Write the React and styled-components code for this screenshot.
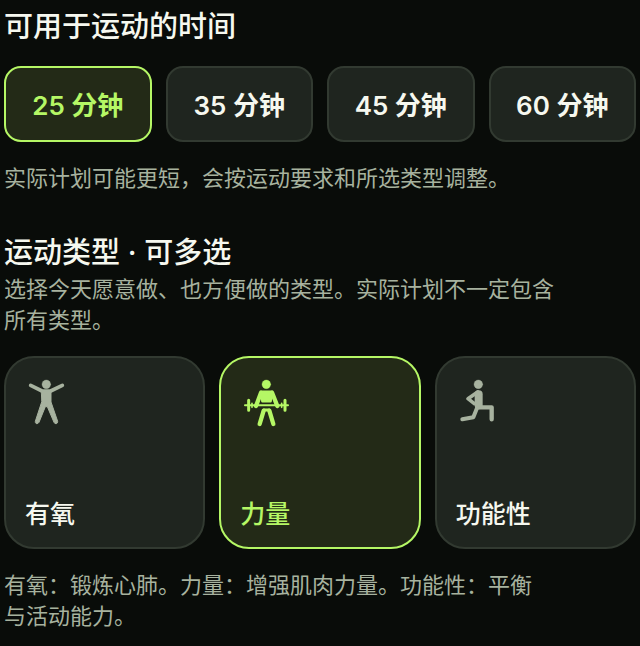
import { useState } from "react";
import styled, { createGlobalStyle } from "styled-components";

const GlobalStyle = createGlobalStyle`
  * {
    box-sizing: border-box;
  }
  body {
    margin: 0;
    background: #090c09;
    color: #f6f8ef;
    font-family: Inter, "Noto Sans CJK SC", sans-serif;
  }
  h2, p {
    margin: 0;
  }
`;

const durations = [25, 35, 45, 60];

const AerobicIcon = () => (
  <Icon viewBox="15 18 144 144">
    <circle cx="79" cy="43" r="13" fill="currentColor" />
    <path d="M32 46L66 63H92L127 46" strokeWidth="11" />
    <path
      d="M65 62H93L93 96L113 154Q114 159 109 161Q104 162 102 157L82 110H76L57 157Q54 162 49 161Q45 158 46 154L65 96Z"
      fill="currentColor"
      strokeWidth="3"
    />
  </Icon>
);

const StrengthIcon = () => (
  <Icon viewBox="13 18 144 144">
    <circle cx="92" cy="43" r="13" fill="currentColor" />
    <path d="M28 106H157" strokeWidth="6" />
    <path d="M39 91V121M148 91V121" strokeWidth="9" />
    <path d="M49 100V112M138 100V112" strokeWidth="5" />
    <path d="M76 68L61 108M109 68L125 108" strokeWidth="13" />
    <path d="M76 65H109L105 94H80Z" fill="currentColor" strokeWidth="7" />
    <path d="M84 122L72 162M101 122L113 162" strokeWidth="13" />
    <path d="M84 120H101" strokeWidth="9" />
  </Icon>
);

const FunctionalIcon = () => (
  <Icon viewBox="17 18 144 144">
    <circle cx="84" cy="43" r="13" fill="currentColor" />
    <path d="M82 66L53 86L72 101" strokeWidth="11" />
    <path d="M85 73V106" strokeWidth="24" />
    <path d="M84 112H124V148" strokeWidth="13" />
    <path d="M81 112L69 142L36 148" strokeWidth="12" />
  </Icon>
);

const types = [
  { id: "aerobic", label: "有氧", Figure: AerobicIcon },
  { id: "strength", label: "力量", Figure: StrengthIcon },
  { id: "functional", label: "功能性", Figure: FunctionalIcon },
];

const App = () => {
  const [duration, setDuration] = useState(25);
  const [selected, setSelected] = useState(["strength"]);

  const toggleType = (id) => {
    setSelected((prev) =>
      prev.includes(id) ? prev.filter((item) => item !== id) : [...prev, id]
    );
  };

  return (
    <>
      <GlobalStyle />
      <Page>
        <Section>
          <Title id="duration-title">可用于运动的时间</Title>
          <DurationRow role="group" aria-labelledby="duration-title">
            {durations.map((minutes) => (
              <DurationButton
                key={minutes}
                type="button"
                $active={duration === minutes}
                aria-pressed={duration === minutes}
                onClick={() => setDuration(minutes)}
              >
                {minutes} 分钟
              </DurationButton>
            ))}
          </DurationRow>
          <Note>实际计划可能更短，会按运动要求和所选类型调整。</Note>
        </Section>

        <Section>
          <Title id="type-title">运动类型 · 可多选</Title>
          <Note $chars={25}>
            选择今天愿意做、也方便做的类型。实际计划不一定包含所有类型。
          </Note>
          <TypeGrid role="group" aria-labelledby="type-title">
            {types.map(({ id, label, Figure }) => (
              <TypeCard
                key={id}
                type="button"
                $active={selected.includes(id)}
                aria-pressed={selected.includes(id)}
                onClick={() => toggleType(id)}
              >
                <IconSlot $active={selected.includes(id)}>
                  <Figure />
                </IconSlot>
                <span>{label}</span>
              </TypeCard>
            ))}
          </TypeGrid>
          <Note $chars={24}>
            有氧：锻炼心肺。力量：增强肌肉力量。功能性：平衡与活动能力。
          </Note>
        </Section>
      </Page>
    </>
  );
};

const Page = styled.main`
  display: flex;
  flex-direction: column;
  gap: 38px;
  padding: 6px 4px 12px;
`;

const Section = styled.section`
  display: flex;
  flex-direction: column;
`;

const Title = styled.h2`
  font-size: 29px;
  font-weight: 500;
  line-height: 42px;
`;

const Note = styled.p`
  max-width: ${({ $chars }) => ($chars ? `${$chars}em` : "none")};
  color: #a7b29f;
  font-size: 22px;
  font-weight: 400;
  line-height: 31px;
`;

const DurationRow = styled.div`
  display: grid;
  grid-template-columns: repeat(4, 1fr);
  gap: 14px;
  margin: 18px 0 21px;
`;

const OptionButton = styled.button`
  border: 2px solid ${({ $active }) => ($active ? "#b5f765" : "#323a31")};
  background: ${({ $active }) => ($active ? "#232a17" : "#1f251f")};
  color: ${({ $active }) => ($active ? "#b5f765" : "#f6f8ef")};
  font-family: inherit;
  cursor: pointer;
`;

const DurationButton = styled(OptionButton)`
  height: 76px;
  padding: 0 0 2px;
  border-radius: 17px;
  font-size: 26px;
  font-weight: 600;
`;

const TypeGrid = styled.div`
  display: grid;
  grid-template-columns: repeat(3, 1fr);
  gap: 14px;
  margin: 20px 0 21px;
`;

const TypeCard = styled(OptionButton)`
  display: flex;
  flex-direction: column;
  align-items: flex-start;
  justify-content: space-between;
  height: 193px;
  padding: 18px 19px 14px;
  border-radius: 30px;
  font-size: 25px;
  font-weight: 500;
  line-height: 38px;
`;

const IconSlot = styled.span`
  display: flex;
  color: ${({ $active }) => ($active ? "inherit" : "#a7b29f")};
`;

const Icon = styled.svg`
  width: 48px;
  height: 48px;
  overflow: visible;
  fill: none;
  stroke: currentColor;
  stroke-linecap: round;
  stroke-linejoin: round;
`;

export default App;
